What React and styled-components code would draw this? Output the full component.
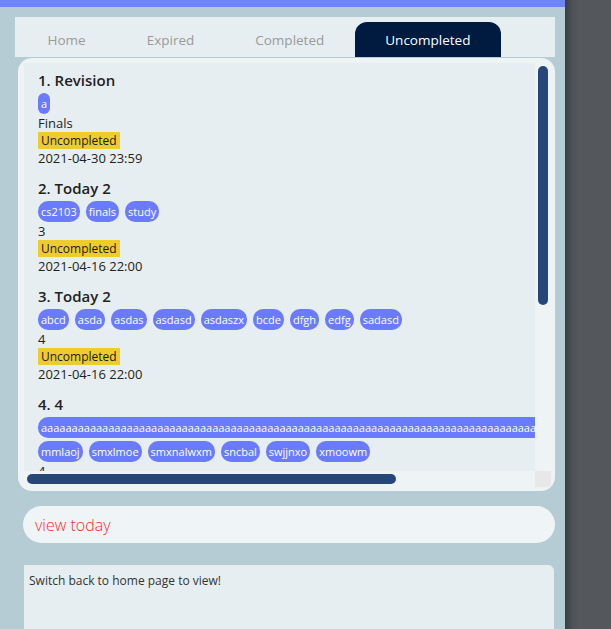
import React from "react";
import styled, { createGlobalStyle } from "styled-components";

const GlobalStyle = createGlobalStyle`
  html, body {
    margin: 0;
    padding: 0;
    height: 100%;
    overflow: hidden;
    font-family: "Open Sans", "Noto Sans", sans-serif;
  }
  #root {
    height: 100%;
  }
`;

const Shell = styled.div`
  display: flex;
  height: 100vh;
`;

const Main = styled.div`
  width: 565px;
  display: flex;
  flex-direction: column;
  background-color: #b6ccd4;
`;

const Side = styled.div`
  flex: 1;
  background: linear-gradient(to right, #3a3e42 0px, #4f5357 8px, #54585c 14px);
`;

const TopBar = styled.div`
  height: 7px;
  background-color: #7083ff;
`;

const TabBar = styled.div`
  display: flex;
  align-items: flex-end;
  height: 40px;
  margin: 10px 10px 0 15px;
  padding-left: 2px;
  background-color: #e7eef1;
`;

const Tab = styled.div`
  height: 35px;
  display: flex;
  align-items: center;
  padding: 0 30.5px;
  font-size: 13.5px;
  color: ${(p) => (p.$active ? "#ffffff" : "#9a9a9a")};
  background-color: ${(p) => (p.$active ? "#001a40" : "transparent")};
  border-radius: 12px 12px 0 0;
`;

const ListPanel = styled.div`
  height: 433px;
  margin: 1px 10px 0 18px;
  padding: 5px 4px 4px 6px;
  box-sizing: border-box;
  background-color: #eef3f6;
  border-radius: 14px;
  display: grid;
  grid-template-columns: 1fr 16px;
  grid-template-rows: 1fr 16px;
`;

const Viewport = styled.div`
  overflow: hidden;
  background-color: #e7eef1;
  padding: 7px 0 0 14px;
  min-width: 0;
  min-height: 0;
`;

const Track = styled.div`
  background-color: #eef3f5;
  padding: 3px;
  display: flex;
  flex-direction: ${(p) => (p.$vertical ? "column" : "row")};
`;

const Thumb = styled.div`
  background-color: #27477a;
  border-radius: 5px;
  ${(p) => (p.$vertical ? "width: 10px; height: 239px;" : "height: 10px; width: 369px;")}
`;

const Corner = styled.div`
  background-color: #e8e8e8;
`;

const Item = styled.div`
  margin-bottom: 11px;
  color: #222;
`;

const Title = styled.div`
  font-size: 15px;
  font-weight: 600;
  line-height: 20px;
  margin-bottom: 3px;
`;

const ChipRow = styled.div`
  display: flex;
  flex-wrap: wrap;
  gap: 3px 6px;
`;

const Chip = styled.span`
  height: 21px;
  line-height: 21px;
  padding: 0 3px;
  border-radius: 10px;
  background-color: #6a7bff;
  color: #ffffff;
  font-size: 11px;
  white-space: nowrap;
`;

const Line = styled.div`
  font-size: 13px;
  line-height: 18px;
`;

const BadgeLine = styled.div`
  font-size: 12px;
  line-height: 17px;
`;

const Badge = styled.span`
  display: inline-block;
  vertical-align: top;
  padding: 0 3px;
  background-color: #efcc2e;
  color: #1a1a1a;
`;

const TodayBox = styled.div`
  height: 37px;
  margin: 15px 10px 0 23px;
  padding-left: 12px;
  display: flex;
  align-items: center;
  border-radius: 19px;
  background-color: #eff4f7;
  color: #ff2a2a;
  font-size: 16px;
  font-weight: 300;
`;

const Notice = styled.div`
  flex: 1;
  margin: 22px 11px 0 24px;
  padding: 7px 5px;
  background-color: #e7eef1;
  border-radius: 0 6px 0 0;
  font-size: 12px;
  color: #333;
`;

const tasks = [
  { title: "1. Revision", tags: ["a"], desc: "Finals", date: "2021-04-30 23:59" },
  { title: "2. Today 2", tags: ["cs2103", "finals", "study"], desc: "3", date: "2021-04-16 22:00" },
  {
    title: "3. Today 2",
    tags: ["abcd", "asda", "asdas", "asdasd", "asdaszx", "bcde", "dfgh", "edfg", "sadasd"],
    desc: "4",
    date: "2021-04-16 22:00",
  },
  {
    title: "4. 4",
    tags: ["a".repeat(104), "mmlaoj", "smxlmoe", "smxnalwxm", "sncbal", "swjjnxo", "xmoowm"],
    desc: "4",
    date: "2021-04-17 12:00",
  },
  { title: "5. Lab", tags: ["cs2105"], desc: "Lab 4", date: "2021-04-18 10:00" },
];

const tabs = ["Home", "Expired", "Completed", "Uncompleted"];

export default function App() {
  return (
    <Shell>
      <GlobalStyle />
      <Main>
        <TopBar />
        <TabBar>
          {tabs.map((t) => (
            <Tab key={t} $active={t === "Uncompleted"}>
              {t}
            </Tab>
          ))}
        </TabBar>
        <ListPanel>
          <Viewport>
            {tasks.map((task) => (
              <Item key={task.title}>
                <Title>{task.title}</Title>
                <ChipRow>
                  {task.tags.map((tag, i) => (
                    <Chip key={i}>{tag}</Chip>
                  ))}
                </ChipRow>
                <Line>{task.desc}</Line>
                <BadgeLine>
                  <Badge>Uncompleted</Badge>
                </BadgeLine>
                <Line>{task.date}</Line>
              </Item>
            ))}
          </Viewport>
          <Track $vertical>
            <Thumb $vertical />
          </Track>
          <Track>
            <Thumb />
          </Track>
          <Corner />
        </ListPanel>
        <TodayBox>view today</TodayBox>
        <Notice>Switch back to home page to view!</Notice>
      </Main>
      <Side />
    </Shell>
  );
}
